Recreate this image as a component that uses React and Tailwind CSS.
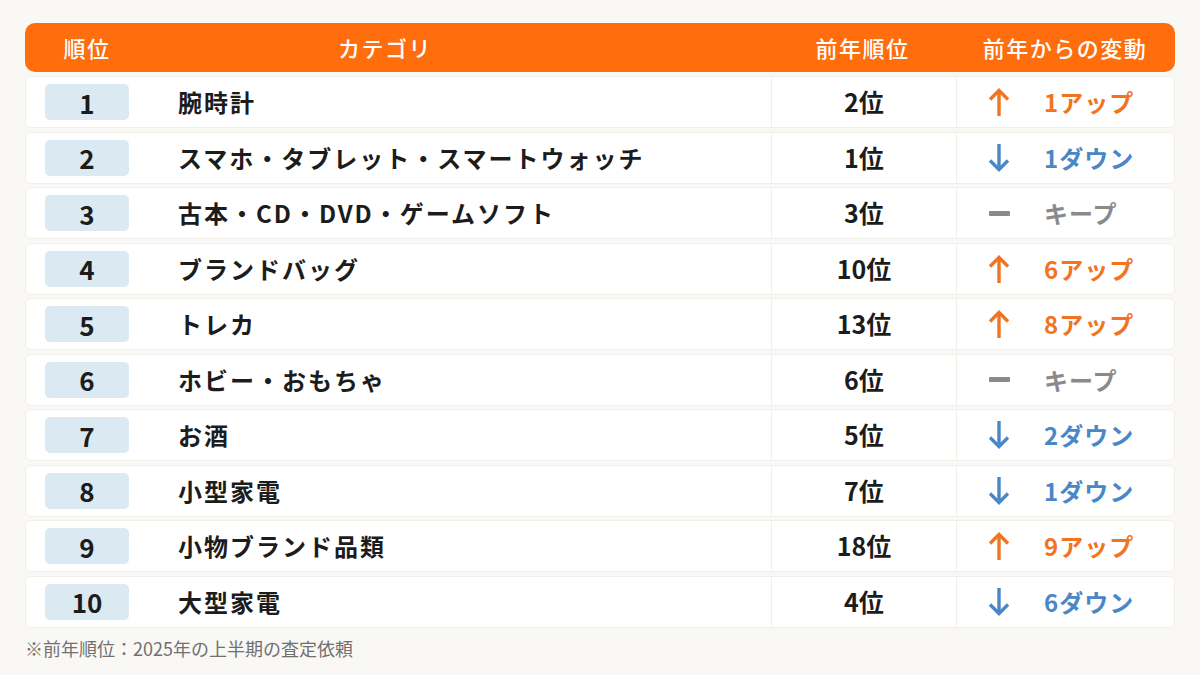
import React from 'react'

const rows=[
{rank:1,name:'腕時計',prev:'2位',dir:'up',change:'1アップ'},
{rank:2,name:'スマホ・タブレット・スマートウォッチ',prev:'1位',dir:'down',change:'1ダウン'},
{rank:3,name:'古本・CD・DVD・ゲームソフト',prev:'3位',dir:'keep',change:'キープ'},
{rank:4,name:'ブランドバッグ',prev:'10位',dir:'up',change:'6アップ'},
{rank:5,name:'トレカ',prev:'13位',dir:'up',change:'8アップ'},
{rank:6,name:'ホビー・おもちゃ',prev:'6位',dir:'keep',change:'キープ'},
{rank:7,name:'お酒',prev:'5位',dir:'down',change:'2ダウン'},
{rank:8,name:'小型家電',prev:'7位',dir:'down',change:'1ダウン'},
{rank:9,name:'小物ブランド品類',prev:'18位',dir:'up',change:'9アップ'},
{rank:10,name:'大型家電',prev:'4位',dir:'down',change:'6ダウン'}
]

function ChangeIcon({dir}){

if(dir==='keep'){
return(
<div className="w-[22px] flex justify-center">
<div className="w-[21px] h-[5px] rounded-[1px] bg-[#8a8a8a]"/>
</div>
)
}

const color=dir==='up'?'#f27320':'#4a87c6'

return(
<svg width="22" height="28" viewBox="0 0 22 28" fill="none">
{dir==='up'?(
<>
<path d="M11 3 V28" stroke={color} strokeWidth="3.4"/>
<path d="M2 11.5 L11 2.5 L20 11.5" stroke={color} strokeWidth="3.4"/>
</>
):(
<>
<path d="M11 0 V25" stroke={color} strokeWidth="3.4"/>
<path d="M2 16.5 L11 25.5 L20 16.5" stroke={color} strokeWidth="3.4"/>
</>
)}
</svg>
)
}

export default function App(){

const textColor={
up:'text-[#f27320]',
down:'text-[#4a87c6]',
keep:'text-[#8a8a8a]'
}

return(

<div className="w-[1200px] h-[675px] bg-[#faf8f5] px-[25px] pt-[23px] font-['Noto_Sans_CJK_JP','Noto_Sans',sans-serif] text-[#1c1c1c]">

<div className="h-[49px] bg-[#ff6d0c] rounded-[10px] flex items-center text-white text-[22px] font-medium tracking-[1.5px]">

<div className="w-[153px] pl-[20px]">
<div className="w-[84px] text-center">順位</div>
</div>

<div className="flex-1 pl-[160px]">カテゴリ</div>

<div className="w-[185px] text-center">前年順位</div>

<div className="w-[220px] text-center">前年からの変動</div>

</div>

<div className="mt-[4px] flex flex-col gap-[3.5px]">

{rows.map(r=>(

<div
key={r.rank}
className="h-[52px] bg-white border border-[#f2efeb] rounded-[6px] flex items-stretch"
>

<div className="w-[152px] pl-[19px] flex items-center">
<div className="w-[84px] h-[36px] rounded-[5px] bg-[#dbe9f3] flex items-center justify-center text-[26px] font-bold">
{r.rank}
</div>
</div>

<div className="flex-1 flex items-center text-[24px] font-bold tracking-[2px]">
{r.name}
</div>

<div className="w-[185px] border-l border-[#f2efeb] flex items-center justify-center text-[25px] font-bold">
{r.prev}
</div>

<div className="w-[218px] border-l border-[#f2efeb] flex items-center pl-[31px]">
<ChangeIcon dir={r.dir}/>
<div className={`ml-[34px] text-[24px] font-bold tracking-[1px] ${textColor[r.dir]}`}>
{r.change}
</div>
</div>

</div>

))}

</div>

<div className="mt-[7px] text-[18px] text-[#707070]">
※前年順位：2025年の上半期の査定依頼
</div>

</div>

)

}
